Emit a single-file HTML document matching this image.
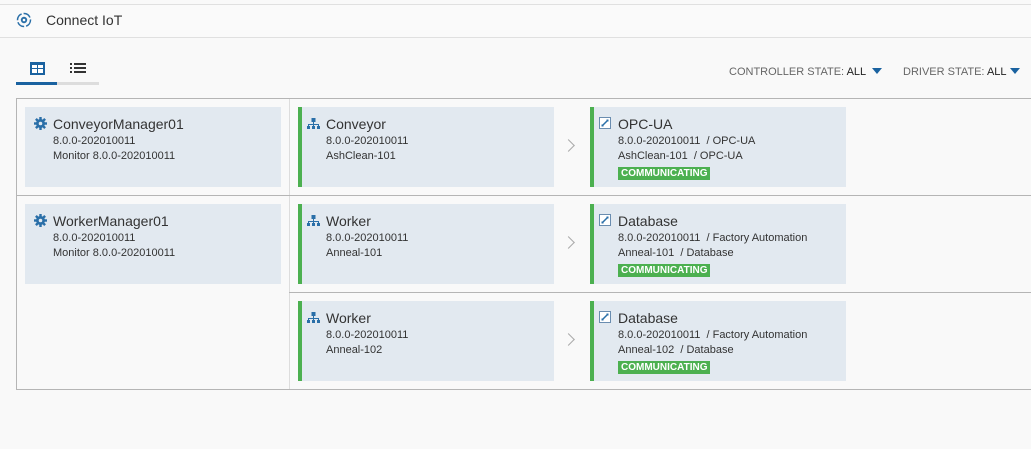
<!DOCTYPE html><html><head><style>
*{margin:0;padding:0;box-sizing:border-box}
body{width:1031px;height:449px;background:#f9f9f9;font-family:"Liberation Sans",sans-serif;color:#333;position:relative;overflow:hidden}
.a{position:absolute}
.card{position:absolute;background:#e2e9f0;}
.g{border-left:4px solid #4cb050}
.t{position:absolute;font-size:14px;color:#333;white-space:nowrap}
.s{position:absolute;font-size:11px;color:#333;white-space:nowrap;line-height:15px}
.badge{position:absolute;background:#4cb050;color:#fff;font-size:10px;font-weight:bold;padding:0 3px;height:13px;line-height:13px}
.chev{position:absolute;width:9px;height:9px;border-right:1px solid #aaa;border-top:1px solid #aaa;transform:rotate(45deg)}
</style></head><body>
<div class="a" style="left:0;top:4px;width:1031px;height:34px;background:#fafafa;border-top:1px solid #e0e0e0;border-bottom:1px solid #e0e0e0"></div>
<svg class="a" style="left:16px;top:12px" width="16" height="16" viewBox="0 0 16 16"><circle cx="8" cy="8" r="6.5" fill="none" stroke="#2a6fa8" stroke-width="1.5" stroke-dasharray="8 2"/><circle cx="8" cy="8" r="3.2" fill="#2a6fa8"/><circle cx="8" cy="8" r="1.3" fill="#fff"/></svg>
<div class="t" style="left:46px;top:12px;font-size:14px">Connect IoT</div>
<svg class="a" style="left:30px;top:62px" width="15" height="13"><rect x="0" y="0" width="15" height="13" fill="#1a62a0"/><rect x="2" y="3" width="5" height="3" fill="#fff"/><rect x="8" y="3" width="5" height="3" fill="#fff"/><rect x="2" y="7" width="5" height="4" fill="#fff"/><rect x="8" y="7" width="5" height="4" fill="#fff"/></svg>
<svg class="a" style="left:70px;top:62px" width="16" height="13" fill="#333"><rect x="0" y="1" width="2" height="2"/><rect x="4" y="1" width="12" height="2"/><rect x="0" y="5" width="2" height="2"/><rect x="4" y="5" width="12" height="2"/><rect x="0" y="9" width="2" height="2"/><rect x="4" y="9" width="12" height="2"/></svg>
<div class="a" style="left:16px;top:82px;width:83px;height:3px;background:#ddd"></div>
<div class="a" style="left:16px;top:82px;width:41px;height:3px;background:#1a62a0"></div>
<div class="a" style="left:729px;top:66px;font-size:11px;color:#666;white-space:nowrap">CONTROLLER STATE: <span style="color:#222">ALL</span></div>
<div class="a" style="left:872px;top:68px;border-left:5px solid transparent;border-right:5px solid transparent;border-top:6px solid #1a62a0"></div>
<div class="a" style="left:903px;top:66px;font-size:11px;color:#666;white-space:nowrap">DRIVER STATE: <span style="color:#222">ALL</span></div>
<div class="a" style="left:1010px;top:68px;border-left:5px solid transparent;border-right:5px solid transparent;border-top:6px solid #1a62a0"></div>
<div class="a" style="left:16px;top:98px;width:1020px;height:292px;border:1px solid #b5b5b5;border-right:none"></div>
<div class="a" style="left:289px;top:99px;width:1px;height:290px;background:#ddd"></div>
<div class="a" style="left:17px;top:195px;width:1014px;height:1px;background:#b5b5b5"></div>
<div class="a" style="left:289px;top:292px;width:742px;height:1px;background:#b5b5b5"></div>
<div class="card" style="left:25px;top:107px;width:256px;height:80px"></div>
<div class="card" style="left:25px;top:204px;width:256px;height:80px"></div>
<svg class="a" style="left:34px;top:117px" width="13" height="13" viewBox="0 0 16 16"><g fill="#2a6fa8"><circle cx="8" cy="8" r="5.5"/><rect x="6.5" y="0" width="3" height="16"/><rect x="0" y="6.5" width="16" height="3"/><rect x="6.5" y="0" width="3" height="16" transform="rotate(45 8 8)"/><rect x="6.5" y="0" width="3" height="16" transform="rotate(-45 8 8)"/></g><circle cx="8" cy="8" r="2.2" fill="#e2e9f0"/></svg>
<svg class="a" style="left:34px;top:214px" width="13" height="13" viewBox="0 0 16 16"><g fill="#2a6fa8"><circle cx="8" cy="8" r="5.5"/><rect x="6.5" y="0" width="3" height="16"/><rect x="0" y="6.5" width="16" height="3"/><rect x="6.5" y="0" width="3" height="16" transform="rotate(45 8 8)"/><rect x="6.5" y="0" width="3" height="16" transform="rotate(-45 8 8)"/></g><circle cx="8" cy="8" r="2.2" fill="#e2e9f0"/></svg>
<div class="t" style="left:53px;top:116px">ConveyorManager01</div>
<div class="s" style="left:53px;top:134px">8.0.0-202010011<br>Monitor 8.0.0-202010011</div>
<div class="t" style="left:53px;top:213px">WorkerManager01</div>
<div class="s" style="left:53px;top:231px">8.0.0-202010011<br>Monitor 8.0.0-202010011</div>
<div class="card g" style="left:298px;top:107px;width:256px;height:80px"></div>
<div class="card g" style="left:298px;top:204px;width:256px;height:80px"></div>
<div class="card g" style="left:298px;top:301px;width:256px;height:80px"></div>
<svg class="a" style="left:307px;top:118px" width="13" height="12" fill="#2a6fa8"><rect x="4.5" y="0" width="4" height="4"/><rect x="6" y="4" width="1" height="2"/><rect x="1" y="6" width="11" height="1"/><rect x="1" y="6" width="1" height="2"/><rect x="6" y="6" width="1" height="2"/><rect x="11" y="6" width="1" height="2"/><rect x="0" y="8" width="3" height="3"/><rect x="5" y="8" width="3" height="3"/><rect x="10" y="8" width="3" height="3"/></svg>
<svg class="a" style="left:307px;top:215px" width="13" height="12" fill="#2a6fa8"><rect x="4.5" y="0" width="4" height="4"/><rect x="6" y="4" width="1" height="2"/><rect x="1" y="6" width="11" height="1"/><rect x="1" y="6" width="1" height="2"/><rect x="6" y="6" width="1" height="2"/><rect x="11" y="6" width="1" height="2"/><rect x="0" y="8" width="3" height="3"/><rect x="5" y="8" width="3" height="3"/><rect x="10" y="8" width="3" height="3"/></svg>
<svg class="a" style="left:307px;top:312px" width="13" height="12" fill="#2a6fa8"><rect x="4.5" y="0" width="4" height="4"/><rect x="6" y="4" width="1" height="2"/><rect x="1" y="6" width="11" height="1"/><rect x="1" y="6" width="1" height="2"/><rect x="6" y="6" width="1" height="2"/><rect x="11" y="6" width="1" height="2"/><rect x="0" y="8" width="3" height="3"/><rect x="5" y="8" width="3" height="3"/><rect x="10" y="8" width="3" height="3"/></svg>
<div class="t" style="left:326px;top:116px">Conveyor</div>
<div class="s" style="left:326px;top:134px">8.0.0-202010011<br>AshClean-101</div>
<div class="t" style="left:326px;top:213px">Worker</div>
<div class="s" style="left:326px;top:231px">8.0.0-202010011<br>Anneal-101</div>
<div class="t" style="left:326px;top:310px">Worker</div>
<div class="s" style="left:326px;top:328px">8.0.0-202010011<br>Anneal-102</div>
<div class="chev" style="left:564px;top:141px"></div>
<div class="chev" style="left:564px;top:238px"></div>
<div class="chev" style="left:564px;top:335px"></div>
<div class="card g" style="left:590px;top:107px;width:256px;height:80px"></div>
<div class="card g" style="left:590px;top:204px;width:256px;height:80px"></div>
<div class="card g" style="left:590px;top:301px;width:256px;height:80px"></div>
<svg class="a" style="left:599px;top:117px" width="12" height="12"><rect x="0.5" y="0.5" width="11" height="11" fill="#fff" stroke="#6a8db0"/><path d="M3.5 8.5L8.5 3.5" stroke="#2a6fa8" stroke-width="1.5"/><rect x="2.5" y="7.5" width="2" height="2" fill="#2a6fa8"/><rect x="7.5" y="2.5" width="2" height="2" fill="#2a6fa8"/></svg>
<svg class="a" style="left:599px;top:214px" width="12" height="12"><rect x="0.5" y="0.5" width="11" height="11" fill="#fff" stroke="#6a8db0"/><path d="M3.5 8.5L8.5 3.5" stroke="#2a6fa8" stroke-width="1.5"/><rect x="2.5" y="7.5" width="2" height="2" fill="#2a6fa8"/><rect x="7.5" y="2.5" width="2" height="2" fill="#2a6fa8"/></svg>
<svg class="a" style="left:599px;top:311px" width="12" height="12"><rect x="0.5" y="0.5" width="11" height="11" fill="#fff" stroke="#6a8db0"/><path d="M3.5 8.5L8.5 3.5" stroke="#2a6fa8" stroke-width="1.5"/><rect x="2.5" y="7.5" width="2" height="2" fill="#2a6fa8"/><rect x="7.5" y="2.5" width="2" height="2" fill="#2a6fa8"/></svg>
<div class="t" style="left:618px;top:116px">OPC-UA</div>
<div class="s" style="left:618px;top:134px">8.0.0-202010011&nbsp; / OPC-UA<br>AshClean-101&nbsp; / OPC-UA</div>
<div class="badge" style="left:618px;top:167px">COMMUNICATING</div>
<div class="t" style="left:618px;top:213px">Database</div>
<div class="s" style="left:618px;top:231px">8.0.0-202010011&nbsp; / Factory Automation<br>Anneal-101&nbsp; / Database</div>
<div class="badge" style="left:618px;top:264px">COMMUNICATING</div>
<div class="t" style="left:618px;top:310px">Database</div>
<div class="s" style="left:618px;top:328px">8.0.0-202010011&nbsp; / Factory Automation<br>Anneal-102&nbsp; / Database</div>
<div class="badge" style="left:618px;top:361px">COMMUNICATING</div>
</body></html>
